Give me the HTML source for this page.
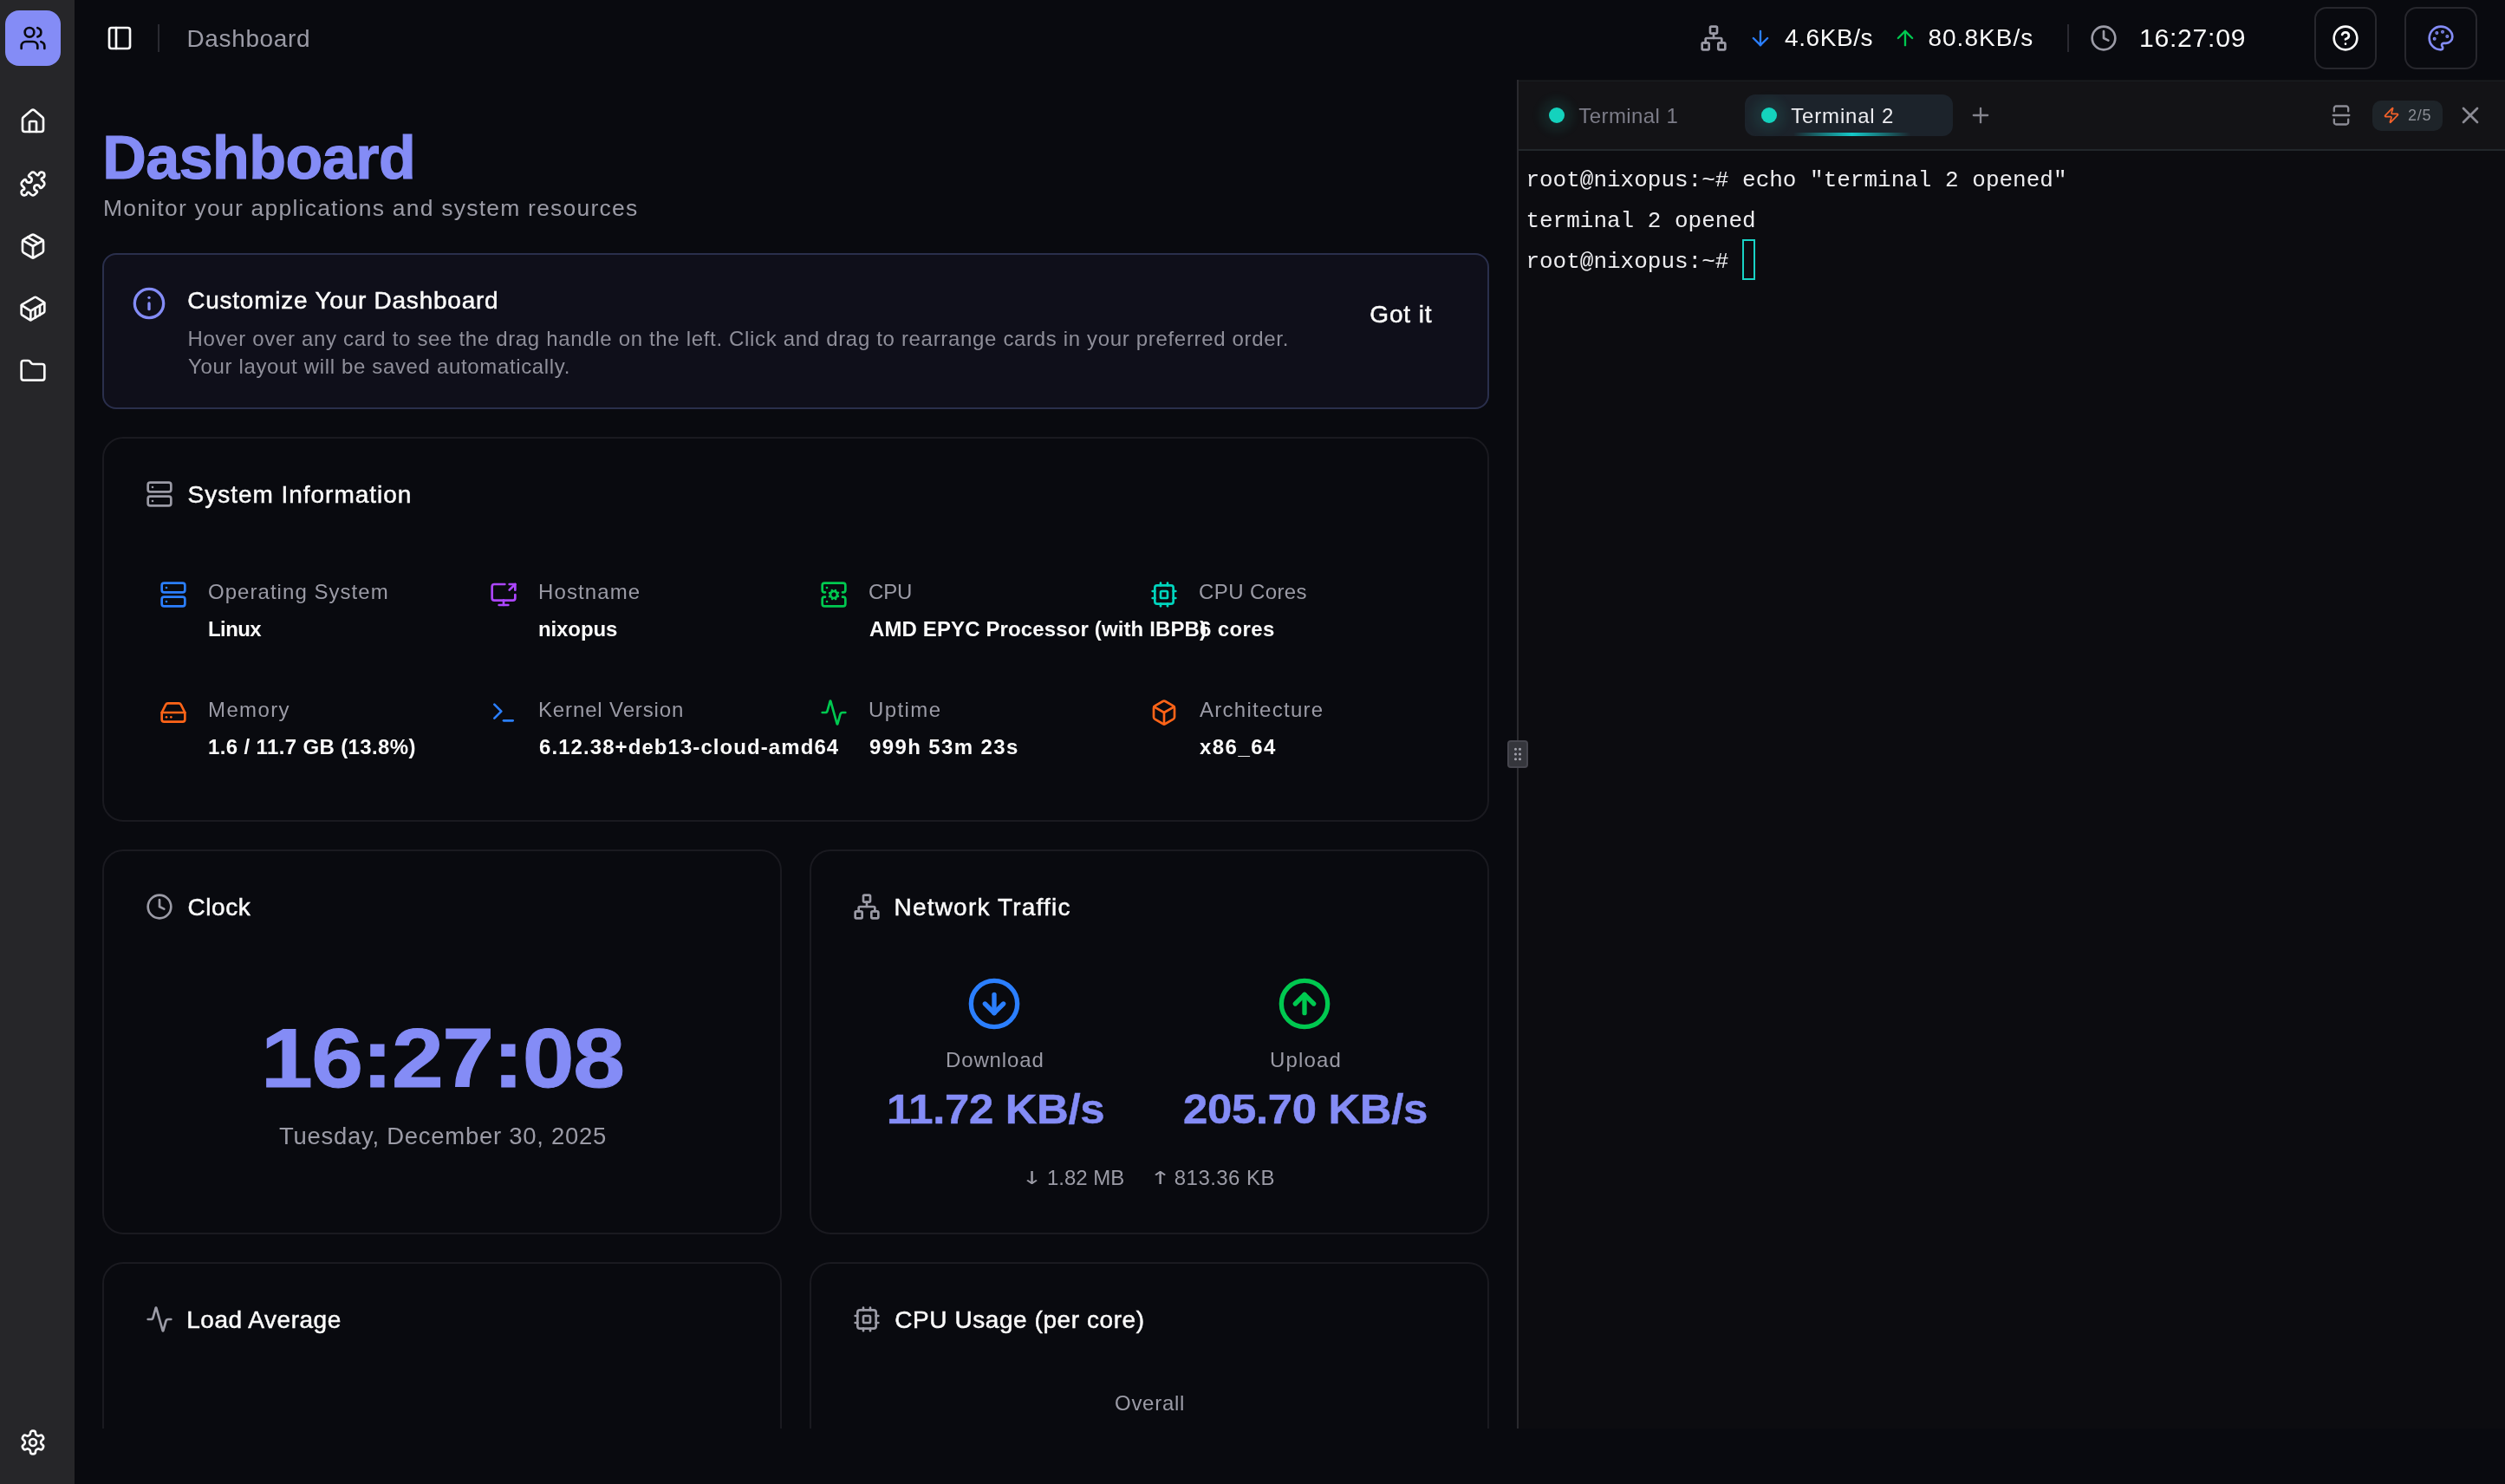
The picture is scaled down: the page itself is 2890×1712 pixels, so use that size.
<!DOCTYPE html>
<html lang="en"><head><meta charset="utf-8"><title>Dashboard</title>
<style>
html,body{margin:0;padding:0;background:#090a0f;}
body{width:2890px;height:1712px;position:relative;overflow:hidden;font-family:"Liberation Sans", sans-serif;}
#app{position:absolute;left:0;top:0;width:2890px;height:1712px;will-change:transform}
.b{position:absolute;box-sizing:border-box}
.t{position:absolute;white-space:pre;box-sizing:border-box}
.ic{position:absolute;fill:none;stroke:currentColor;stroke-linecap:round;stroke-linejoin:round;overflow:visible}
</style></head><body><div id="app">
<div class="b" style="left:0px;top:0px;width:86px;height:1712px;background:#262629"></div>
<div class="b" style="left:6px;top:12px;width:64px;height:64px;background:#848cf6;border-radius:16px"></div>
<svg class="ic" style="left:22px;top:28px;color:#0a0a10;" width="32" height="32" viewBox="0 0 24 24" stroke-width="2"><path d="M16 21v-2a4 4 0 0 0-4-4H6a4 4 0 0 0-4 4v2"/><circle cx="9" cy="7" r="4"/><path d="M22 21v-2a4 4 0 0 0-3-3.87"/><path d="M16 3.13a4 4 0 0 1 0 7.75"/></svg>
<svg class="ic" style="left:22px;top:124px;color:#fafafa;" width="32" height="32" viewBox="0 0 24 24" stroke-width="2"><path d="M15 21v-8a1 1 0 0 0-1-1h-4a1 1 0 0 0-1 1v8"/><path d="M3 10a2 2 0 0 1 .709-1.528l7-5.999a2 2 0 0 1 2.582 0l7 5.999A2 2 0 0 1 21 10v9a2 2 0 0 1-2 2H5a2 2 0 0 1-2-2z"/></svg>
<svg class="ic" style="left:22px;top:196px;color:#fafafa;" width="32" height="32" viewBox="0 0 24 24" stroke-width="2"><path d="M15.39 4.39a1 1 0 0 0 1.68-.474 2.5 2.5 0 1 1 3.014 3.015 1 1 0 0 0-.474 1.68l1.683 1.682a2.414 2.414 0 0 1 0 3.414L19.61 15.39a1 1 0 0 1-1.68-.474 2.5 2.5 0 1 0-3.014 3.015 1 1 0 0 1 .474 1.68l-1.683 1.682a2.414 2.414 0 0 1-3.414 0L8.61 19.61a1 1 0 0 0-1.68.474 2.5 2.5 0 1 1-3.014-3.015 1 1 0 0 0 .474-1.68l-1.683-1.682a2.414 2.414 0 0 1 0-3.414L4.39 8.61a1 1 0 0 1 1.68.474 2.5 2.5 0 1 0 3.014-3.015 1 1 0 0 1-.474-1.68l1.683-1.682a2.414 2.414 0 0 1 3.414 0z"/></svg>
<svg class="ic" style="left:22px;top:268px;color:#fafafa;" width="32" height="32" viewBox="0 0 24 24" stroke-width="2"><path d="M11 21.73a2 2 0 0 0 2 0l7-4A2 2 0 0 0 21 16V8a2 2 0 0 0-1-1.73l-7-4a2 2 0 0 0-2 0l-7 4A2 2 0 0 0 3 8v8a2 2 0 0 0 1 1.73z"/><path d="M12 22V12"/><polyline points="3.29 7 12 12 20.71 7"/><path d="m7.5 4.27 9 5.15"/></svg>
<svg class="ic" style="left:22px;top:340px;color:#fafafa;" width="32" height="32" viewBox="0 0 24 24" stroke-width="2"><path d="M22 7.7c0-.6-.4-1.2-.8-1.5l-6.3-3.9a1.72 1.72 0 0 0-1.7 0l-10.3 6c-.5.2-.9.8-.9 1.4v6.6c0 .5.4 1.2.8 1.5l6.3 3.9a1.72 1.72 0 0 0 1.7 0l10.3-6c.5-.3.9-1 .9-1.5Z"/><path d="M10 21.9V14L2.1 9.1"/><path d="m10 14 11.9-6.9"/><path d="M14 19.8v-8.1"/><path d="M18 17.5V9.4"/></svg>
<svg class="ic" style="left:22px;top:412px;color:#fafafa;" width="32" height="32" viewBox="0 0 24 24" stroke-width="2"><path d="M20 20a2 2 0 0 0 2-2V8a2 2 0 0 0-2-2h-7.9a2 2 0 0 1-1.69-.9L9.6 3.9A2 2 0 0 0 7.93 3H4a2 2 0 0 0-2 2v13a2 2 0 0 0 2 2Z"/></svg>
<svg class="ic" style="left:22px;top:1648px;color:#fafafa;" width="32" height="32" viewBox="0 0 24 24" stroke-width="2"><path d="M12.22 2h-.44a2 2 0 0 0-2 2v.18a2 2 0 0 1-1 1.73l-.43.25a2 2 0 0 1-2 0l-.15-.08a2 2 0 0 0-2.73.73l-.22.38a2 2 0 0 0 .73 2.73l.15.1a2 2 0 0 1 1 1.72v.51a2 2 0 0 1-1 1.74l-.15.09a2 2 0 0 0-.73 2.73l.22.38a2 2 0 0 0 2.73.73l.15-.08a2 2 0 0 1 2 0l.43.25a2 2 0 0 1 1 1.73V20a2 2 0 0 0 2 2h.44a2 2 0 0 0 2-2v-.18a2 2 0 0 1 1-1.73l.43-.25a2 2 0 0 1 2 0l.15.08a2 2 0 0 0 2.73-.73l.22-.39a2 2 0 0 0-.73-2.73l-.15-.08a2 2 0 0 1-1-1.74v-.5a2 2 0 0 1 1-1.74l.15-.09a2 2 0 0 0 .73-2.73l-.22-.38a2 2 0 0 0-2.73-.73l-.15.08a2 2 0 0 1-2 0l-.43-.25a2 2 0 0 1-1-1.73V4a2 2 0 0 0-2-2z"/><circle cx="12" cy="12" r="3"/></svg>
<svg class="ic" style="left:122px;top:28px;color:#fafafa;" width="32" height="32" viewBox="0 0 24 24" stroke-width="2"><rect width="18" height="18" x="3" y="3" rx="2"/><path d="M9 3v18"/></svg>
<div class="b" style="left:182px;top:28px;width:2px;height:32px;background:#2a2a31"></div>
<div class="t" style="left:215.50px;top:30.50px;font:400 28px/28px 'Liberation Sans', sans-serif;color:#9b9ba6;letter-spacing:0.637px">Dashboard</div>
<svg class="ic" style="left:1961px;top:28px;color:#9b9ba6;" width="32" height="32" viewBox="0 0 24 24" stroke-width="2"><rect x="16" y="16" width="6" height="6" rx="1"/><rect x="2" y="16" width="6" height="6" rx="1"/><rect x="9" y="2" width="6" height="6" rx="1"/><path d="M5 16v-3a1 1 0 0 1 1-1h12a1 1 0 0 1 1 1v3"/><path d="M12 12V8"/></svg>
<svg class="ic" style="left:2017px;top:30px;color:#2b7fff;" width="28" height="28" viewBox="0 0 24 24" stroke-width="2"><path d="M12 5v14"/><path d="m19 12-7 7-7-7"/></svg>
<div class="t" style="left:2059.00px;top:30.30px;font:400 28px/28px 'Liberation Sans', sans-serif;color:#fafafa;letter-spacing:0.591px">4.6KB/s</div>
<svg class="ic" style="left:2184px;top:30px;color:#00c950;" width="28" height="28" viewBox="0 0 24 24" stroke-width="2"><path d="m5 12 7-7 7 7"/><path d="M12 19V5"/></svg>
<div class="t" style="left:2224.40px;top:30.30px;font:400 28px/28px 'Liberation Sans', sans-serif;color:#fafafa;letter-spacing:1.025px">80.8KB/s</div>
<div class="b" style="left:2385px;top:28px;width:2px;height:32px;background:#2a2a31"></div>
<svg class="ic" style="left:2411px;top:28px;color:#9b9ba6;" width="32" height="32" viewBox="0 0 24 24" stroke-width="2"><circle cx="12" cy="12" r="10"/><polyline points="12 6 12 12 16 14"/></svg>
<div class="t" style="left:2467.92px;top:30.45px;font:400 29px/29px 'Liberation Sans', sans-serif;color:#fafafa;letter-spacing:0.694px;transform:scaleX(1.04);transform-origin:0 0">16:27:09</div>
<div class="b" style="left:2670px;top:8px;width:72px;height:72px;border:2px solid #27272d;border-radius:14px"></div>
<svg class="ic" style="left:2690px;top:28px;color:#fafafa;" width="32" height="32" viewBox="0 0 24 24" stroke-width="2"><circle cx="12" cy="12" r="10"/><path d="M9.09 9a3 3 0 0 1 5.83 1c0 2-3 3-3 3"/><path d="M12 17h.01"/></svg>
<div class="b" style="left:2774px;top:8px;width:84px;height:72px;border:2px solid #27272d;border-radius:14px"></div>
<svg class="ic" style="left:2800px;top:28px;color:#848cf6;" width="32" height="32" viewBox="0 0 24 24" stroke-width="2"><circle cx="13.5" cy="6.5" r=".5" fill="currentColor"/><circle cx="17.5" cy="10.5" r=".5" fill="currentColor"/><circle cx="8.5" cy="7.5" r=".5" fill="currentColor"/><circle cx="6.5" cy="12.5" r=".5" fill="currentColor"/><path d="M12 2C6.5 2 2 6.5 2 12s4.5 10 10 10c.926 0 1.648-.746 1.648-1.688 0-.437-.18-.835-.437-1.125-.29-.289-.438-.652-.438-1.125a1.64 1.64 0 0 1 1.668-1.668h1.996c3.051 0 5.555-2.503 5.555-5.554C21.965 6.012 17.461 2 12 2z"/></svg>
<div class="t" style="left:118.30px;top:146.55px;font:700 70px/70px 'Liberation Sans', sans-serif;color:#848cf6;letter-spacing:-0.533px;-webkit-text-stroke:1.2px #848cf6">Dashboard</div>
<div class="t" style="left:119.00px;top:226.97px;font:400 26.5px/26.5px 'Liberation Sans', sans-serif;color:#9b9ba6;letter-spacing:1.224px">Monitor your applications and system resources</div>
<div class="b" style="left:118px;top:292px;width:1600px;height:180px;background:#0f0f1a;border:2px solid #2a2f4c;border-radius:16px"></div>
<svg class="ic" style="left:152px;top:330px;color:#848cf6;" width="40" height="40" viewBox="0 0 24 24" stroke-width="2"><circle cx="12" cy="12" r="10"/><path d="M12 16v-4"/><path d="M12 8h.01"/></svg>
<div class="t" style="left:216.25px;top:332.80px;font:400 28px/28px 'Liberation Sans', sans-serif;color:#fafafa;letter-spacing:0.761px;-webkit-text-stroke:0.5px #fafafa">Customize Your Dashboard</div>
<div class="t" style="left:216.50px;top:378.98px;font:400 24px/24px 'Liberation Sans', sans-serif;color:#8f8f9a;letter-spacing:0.671px">Hover over any card to see the drag handle on the left. Click and drag to rearrange cards in your preferred order.</div>
<div class="t" style="left:217.00px;top:410.68px;font:400 24px/24px 'Liberation Sans', sans-serif;color:#8f8f9a;letter-spacing:0.653px">Your layout will be saved automatically.</div>
<div class="t" style="left:1580.25px;top:348.60px;font:400 28px/28px 'Liberation Sans', sans-serif;color:#fafafa;letter-spacing:0.874px;-webkit-text-stroke:0.5px #fafafa">Got it</div>
<div class="b" style="left:118px;top:504px;width:1600px;height:444px;border:2px solid #1a1a20;border-radius:24px"></div>
<svg class="ic" style="left:168px;top:554px;color:#9b9ba6;" width="32" height="32" viewBox="0 0 24 24" stroke-width="2"><rect width="20" height="8" x="2" y="2" rx="2" ry="2"/><rect width="20" height="8" x="2" y="14" rx="2" ry="2"/><line x1="6" x2="6.01" y1="6" y2="6"/><line x1="6" x2="6.01" y1="18" y2="18"/></svg>
<div class="t" style="left:216.55px;top:557.30px;font:400 28px/28px 'Liberation Sans', sans-serif;color:#fafafa;letter-spacing:0.975px;-webkit-text-stroke:0.5px #fafafa">System Information</div>
<svg class="ic" style="left:184px;top:670px;color:#2b7fff;" width="32" height="32" viewBox="0 0 24 24" stroke-width="2"><rect width="20" height="8" x="2" y="2" rx="2" ry="2"/><rect width="20" height="8" x="2" y="14" rx="2" ry="2"/><line x1="6" x2="6.01" y1="6" y2="6"/><line x1="6" x2="6.01" y1="18" y2="18"/></svg>
<div class="t" style="left:240.00px;top:671.18px;font:400 24px/24px 'Liberation Sans', sans-serif;color:#9b9ba6;letter-spacing:1.041px">Operating System</div>
<div class="t" style="left:240.00px;top:713.98px;font:700 24px/24px 'Liberation Sans', sans-serif;color:#fafafa;letter-spacing:-0.587px">Linux</div>
<svg class="ic" style="left:565px;top:670px;color:#ad46ff;" width="32" height="32" viewBox="0 0 24 24" stroke-width="2"><path d="M13 3H4a2 2 0 0 0-2 2v10a2 2 0 0 0 2 2h16a2 2 0 0 0 2-2v-3"/><path d="M8 21h8"/><path d="M12 17v4"/><path d="m17 8 5-5"/><path d="M17 3h5v5"/></svg>
<div class="t" style="left:621.00px;top:671.18px;font:400 24px/24px 'Liberation Sans', sans-serif;color:#9b9ba6;letter-spacing:1.109px">Hostname</div>
<div class="t" style="left:621.00px;top:713.98px;font:700 24px/24px 'Liberation Sans', sans-serif;color:#fafafa;letter-spacing:-0.109px">nixopus</div>
<svg class="ic" style="left:946px;top:670px;color:#00c950;" width="32" height="32" viewBox="0 0 24 24" stroke-width="2"><circle cx="12" cy="12" r="3"/><path d="M4.5 10H4a2 2 0 0 1-2-2V4a2 2 0 0 1 2-2h16a2 2 0 0 1 2 2v4a2 2 0 0 1-2 2h-.5"/><path d="M4.5 14H4a2 2 0 0 0-2 2v4a2 2 0 0 0 2 2h16a2 2 0 0 0 2-2v-4a2 2 0 0 0-2-2h-.5"/><path d="M6 6h.01"/><path d="M6 18h.01"/><path d="m15.7 13.4-.9-.3"/><path d="m9.2 10.9-.9-.3"/><path d="m10.6 15.7.3-.9"/><path d="m13.6 15.7-.4-1"/><path d="m10.8 9.3-.4-1"/><path d="m8.3 13.6 1-.4"/><path d="m14.7 10.8 1-.4"/><path d="m13.4 8.3-.3.9"/></svg>
<div class="t" style="left:1002.00px;top:671.18px;font:400 24px/24px 'Liberation Sans', sans-serif;color:#9b9ba6;letter-spacing:-0.170px">CPU</div>
<div class="t" style="left:1003.00px;top:713.98px;font:700 24px/24px 'Liberation Sans', sans-serif;color:#fafafa;letter-spacing:0.124px">AMD EPYC Processor (with IBPB)</div>
<svg class="ic" style="left:1327px;top:670px;color:#00d5be;" width="32" height="32" viewBox="0 0 24 24" stroke-width="2"><rect width="16" height="16" x="4" y="4" rx="2"/><rect width="6" height="6" x="9" y="9" rx="1"/><path d="M15 2v2"/><path d="M15 20v2"/><path d="M2 15h2"/><path d="M2 9h2"/><path d="M20 15h2"/><path d="M20 9h2"/><path d="M9 2v2"/><path d="M9 20v2"/></svg>
<div class="t" style="left:1383.00px;top:671.18px;font:400 24px/24px 'Liberation Sans', sans-serif;color:#9b9ba6;letter-spacing:0.405px">CPU Cores</div>
<div class="t" style="left:1384.00px;top:713.98px;font:700 24px/24px 'Liberation Sans', sans-serif;color:#fafafa;letter-spacing:0.382px">6 cores</div>
<svg class="ic" style="left:184px;top:806px;color:#ff6418;" width="32" height="32" viewBox="0 0 24 24" stroke-width="2"><line x1="22" x2="2" y1="12" y2="12"/><path d="M5.45 5.11 2 12v6a2 2 0 0 0 2 2h16a2 2 0 0 0 2-2v-6l-3.45-6.89A2 2 0 0 0 16.76 4H7.24a2 2 0 0 0-1.79 1.11z"/><line x1="6" x2="6.01" y1="16" y2="16"/><line x1="10" x2="10.01" y1="16" y2="16"/></svg>
<div class="t" style="left:240.00px;top:807.18px;font:400 24px/24px 'Liberation Sans', sans-serif;color:#9b9ba6;letter-spacing:1.386px">Memory</div>
<div class="t" style="left:240.00px;top:849.98px;font:700 24px/24px 'Liberation Sans', sans-serif;color:#fafafa;letter-spacing:0.363px">1.6 / 11.7 GB (13.8%)</div>
<svg class="ic" style="left:565px;top:806px;color:#2b7fff;" width="32" height="32" viewBox="0 0 24 24" stroke-width="2"><polyline points="4 17 10 11 4 5"/><line x1="12" x2="20" y1="19" y2="19"/></svg>
<div class="t" style="left:621.00px;top:807.18px;font:400 24px/24px 'Liberation Sans', sans-serif;color:#9b9ba6;letter-spacing:0.866px">Kernel Version</div>
<div class="t" style="left:622.00px;top:849.98px;font:700 24px/24px 'Liberation Sans', sans-serif;color:#fafafa;letter-spacing:1.070px">6.12.38+deb13-cloud-amd64</div>
<svg class="ic" style="left:946px;top:806px;color:#00c950;" width="32" height="32" viewBox="0 0 24 24" stroke-width="2"><path d="M22 12h-2.48a2 2 0 0 0-1.93 1.46l-2.35 8.36a.25.25 0 0 1-.48 0L9.24 2.18a.25.25 0 0 0-.48 0l-2.35 8.36A2 2 0 0 1 4.49 12H2"/></svg>
<div class="t" style="left:1002.00px;top:807.18px;font:400 24px/24px 'Liberation Sans', sans-serif;color:#9b9ba6;letter-spacing:1.406px">Uptime</div>
<div class="t" style="left:1003.00px;top:849.98px;font:700 24px/24px 'Liberation Sans', sans-serif;color:#fafafa;letter-spacing:1.385px">999h 53m 23s</div>
<svg class="ic" style="left:1327px;top:806px;color:#ff6418;" width="32" height="32" viewBox="0 0 24 24" stroke-width="2"><path d="M21 8a2 2 0 0 0-1-1.73l-7-4a2 2 0 0 0-2 0l-7 4A2 2 0 0 0 3 8v8a2 2 0 0 0 1 1.73l7 4a2 2 0 0 0 2 0l7-4A2 2 0 0 0 21 16Z"/><path d="m3.3 7 8.7 5 8.7-5"/><path d="M12 22V12"/></svg>
<div class="t" style="left:1384.00px;top:807.18px;font:400 24px/24px 'Liberation Sans', sans-serif;color:#9b9ba6;letter-spacing:1.282px">Architecture</div>
<div class="t" style="left:1384.00px;top:849.98px;font:700 24px/24px 'Liberation Sans', sans-serif;color:#fafafa;letter-spacing:1.452px">x86_64</div>
<div class="b" style="left:118px;top:980px;width:784px;height:444px;border:2px solid #1a1a20;border-radius:24px"></div>
<svg class="ic" style="left:168px;top:1030px;color:#9b9ba6;" width="32" height="32" viewBox="0 0 24 24" stroke-width="2"><circle cx="12" cy="12" r="10"/><polyline points="12 6 12 12 16 14"/></svg>
<div class="t" style="left:216.45px;top:1033.30px;font:400 28px/28px 'Liberation Sans', sans-serif;color:#fafafa;letter-spacing:0.572px;-webkit-text-stroke:0.5px #fafafa">Clock</div>
<div class="t" style="left:300.78px;top:1173.34px;font:700 96px/96px 'Liberation Sans', sans-serif;color:#848cf6;letter-spacing:-1.329px;-webkit-text-stroke:1px #848cf6;transform:scaleX(1.12);transform-origin:0 0">16:27:08</div>
<div class="t" style="left:322.00px;top:1296.72px;font:400 27.5px/27.5px 'Liberation Sans', sans-serif;color:#9b9ba6;letter-spacing:0.722px">Tuesday, December 30, 2025</div>
<div class="b" style="left:934px;top:980px;width:784px;height:444px;border:2px solid #1a1a20;border-radius:24px"></div>
<svg class="ic" style="left:984px;top:1030px;color:#9b9ba6;" width="32" height="32" viewBox="0 0 24 24" stroke-width="2"><rect x="16" y="16" width="6" height="6" rx="1"/><rect x="2" y="16" width="6" height="6" rx="1"/><rect x="9" y="2" width="6" height="6" rx="1"/><path d="M5 16v-3a1 1 0 0 1 1-1h12a1 1 0 0 1 1 1v3"/><path d="M12 12V8"/></svg>
<div class="t" style="left:1031.55px;top:1033.30px;font:400 28px/28px 'Liberation Sans', sans-serif;color:#fafafa;letter-spacing:1.193px;-webkit-text-stroke:0.5px #fafafa">Network Traffic</div>
<svg class="ic" style="left:1115px;top:1126px;color:#2b7fff;" width="64" height="64" viewBox="0 0 24 24" stroke-width="2"><circle cx="12" cy="12" r="10"/><path d="M12 8v8"/><path d="m8 12 4 4 4-4"/></svg>
<svg class="ic" style="left:1473px;top:1126px;color:#00c950;" width="64" height="64" viewBox="0 0 24 24" stroke-width="2"><circle cx="12" cy="12" r="10"/><path d="m16 12-4-4-4 4"/><path d="M12 16V8"/></svg>
<div class="t" style="left:1091.00px;top:1210.68px;font:400 24px/24px 'Liberation Sans', sans-serif;color:#9b9ba6;letter-spacing:0.859px">Download</div>
<div class="t" style="left:1465.00px;top:1210.68px;font:400 24px/24px 'Liberation Sans', sans-serif;color:#9b9ba6;letter-spacing:1.139px">Upload</div>
<div class="t" style="left:1022.67px;top:1255.77px;font:700 48px/48px 'Liberation Sans', sans-serif;color:#848cf6;letter-spacing:-0.307px;-webkit-text-stroke:0.5px #848cf6;transform:scaleX(1.06);transform-origin:0 0">11.72 KB/s</div>
<div class="t" style="left:1365.19px;top:1255.77px;font:700 48px/48px 'Liberation Sans', sans-serif;color:#848cf6;letter-spacing:-0.316px;-webkit-text-stroke:0.5px #848cf6;transform:scaleX(1.06);transform-origin:0 0">205.70 KB/s</div>
<div class="t" style="left:1178.08px;top:1349.25px;font:400 20.5px/20.5px 'DejaVu Sans', sans-serif;color:#9b9ba6;letter-spacing:0.000px;transform:scaleX(1.43);transform-origin:0 0">↓</div>
<div class="t" style="left:1208.00px;top:1346.68px;font:400 24px/24px 'Liberation Sans', sans-serif;color:#9b9ba6;letter-spacing:-0.029px">1.82 MB</div>
<div class="t" style="left:1325.84px;top:1349.25px;font:400 20.5px/20.5px 'DejaVu Sans', sans-serif;color:#9b9ba6;letter-spacing:0.000px;transform:scaleX(1.44);transform-origin:0 0">↑</div>
<div class="t" style="left:1354.80px;top:1346.68px;font:400 24px/24px 'Liberation Sans', sans-serif;color:#9b9ba6;letter-spacing:0.452px">813.36 KB</div>
<div class="b" style="left:86px;top:1440px;width:1664px;height:208px;overflow:hidden">
<div class="b" style="left:32px;top:16px;width:784px;height:444px;border:2px solid #1a1a20;border-radius:24px"></div>
<div class="b" style="left:848px;top:16px;width:784px;height:444px;border:2px solid #1a1a20;border-radius:24px"></div>
</div>
<svg class="ic" style="left:168px;top:1506px;color:#9b9ba6;" width="32" height="32" viewBox="0 0 24 24" stroke-width="2"><path d="M22 12h-2.48a2 2 0 0 0-1.93 1.46l-2.35 8.36a.25.25 0 0 1-.48 0L9.24 2.18a.25.25 0 0 0-.48 0l-2.35 8.36A2 2 0 0 1 4.49 12H2"/></svg>
<div class="t" style="left:215.25px;top:1509.30px;font:400 28px/28px 'Liberation Sans', sans-serif;color:#fafafa;letter-spacing:0.520px;-webkit-text-stroke:0.5px #fafafa">Load Average</div>
<svg class="ic" style="left:984px;top:1506px;color:#9b9ba6;" width="32" height="32" viewBox="0 0 24 24" stroke-width="2"><rect width="16" height="16" x="4" y="4" rx="2"/><rect width="6" height="6" x="9" y="9" rx="1"/><path d="M15 2v2"/><path d="M15 20v2"/><path d="M2 15h2"/><path d="M2 9h2"/><path d="M20 15h2"/><path d="M20 9h2"/><path d="M9 2v2"/><path d="M9 20v2"/></svg>
<div class="t" style="left:1032.25px;top:1509.30px;font:400 28px/28px 'Liberation Sans', sans-serif;color:#fafafa;letter-spacing:0.571px;-webkit-text-stroke:0.5px #fafafa">CPU Usage (per core)</div>
<div class="t" style="left:1286.00px;top:1606.68px;font:400 24px/24px 'Liberation Sans', sans-serif;color:#9b9ba6;letter-spacing:0.719px">Overall</div>
<div class="b" style="left:1750px;top:92px;width:1140px;height:1556px;background:#0c0c10"></div>
<div class="b" style="left:1750px;top:92px;width:1140px;height:82px;background:#131316;border-bottom:2px solid #22272b"></div>
<div class="b" style="left:1752px;top:93px;width:1138px;height:1px;background:#181d20"></div>
<div class="b" style="left:1750px;top:92px;width:2px;height:1556px;background:#2a2a2f"></div>
<div class="b" style="left:1787px;top:124px;width:18px;height:18px;background:#14d2bd;border-radius:50%;box-shadow:0 0 12px 10px rgba(45,212,191,.09)"></div>
<div class="t" style="left:1821.30px;top:121.68px;font:400 24px/24px 'Liberation Sans', sans-serif;color:#7c7c88;letter-spacing:0.416px">Terminal 1</div>
<div class="b" style="left:2013px;top:109px;width:240px;height:48px;background:#1c232b;border-radius:12px;overflow:hidden"></div>
<div class="b" style="left:2069px;top:153px;width:135px;height:4px;background:linear-gradient(90deg,rgba(20,210,189,0),#14c8c8 50%,rgba(20,210,189,0))"></div>
<div class="b" style="left:2032px;top:124px;width:18px;height:18px;background:#14d2bd;border-radius:50%;box-shadow:0 0 12px 10px rgba(45,212,191,.09)"></div>
<div class="t" style="left:2066.30px;top:121.68px;font:400 24px/24px 'Liberation Sans', sans-serif;color:#ececf0;letter-spacing:0.816px">Terminal 2</div>
<svg class="ic" style="left:2271px;top:119px;color:#85858e;" width="28" height="28" viewBox="0 0 24 24" stroke-width="2"><path d="M5 12h14"/><path d="M12 5v14"/></svg>
<svg class="ic" style="left:2687px;top:119px;color:#8c8c95;" width="28" height="28" viewBox="0 0 24 24" stroke-width="2"><path d="M5 8V5c0-1 1-2 2-2h10c1 0 2 1 2 2v3"/><path d="M19 16v3c0 1-1 2-2 2H7c-1 0-2-1-2-2v-3"/><line x1="4" x2="20" y1="12" y2="12"/></svg>
<div class="b" style="left:2737px;top:116px;width:81px;height:35px;background:#1e2429;border-radius:10px"></div>
<svg class="ic" style="left:2749px;top:123px;color:#f4622a;" width="20" height="20" viewBox="0 0 24 24" stroke-width="2"><path d="M4 14a1 1 0 0 1-.78-1.63l9.9-10.2a.5.5 0 0 1 .86.46l-1.92 6.02A1 1 0 0 0 13 10h7a1 1 0 0 1 .78 1.63l-9.9 10.2a.5.5 0 0 1-.86-.46l1.92-6.02A1 1 0 0 0 11 14z"/></svg>
<div class="t" style="left:2778.00px;top:124.46px;font:400 18px/18px 'Liberation Sans', sans-serif;color:#8a8d94;letter-spacing:0.694px">2/5</div>
<svg class="ic" style="left:2834px;top:117px;color:#8c8c95;" width="32" height="32" viewBox="0 0 24 24" stroke-width="2"><path d="M18 6 6 18"/><path d="m6 6 12 12"/></svg>
<div class="t" style="left:1760.4px;top:182px;font:26px/47px 'Liberation Mono', monospace;color:#ededf0;padding-top:3px;height:44px">root@nixopus:~# echo &quot;terminal 2 opened&quot;</div>
<div class="t" style="left:1760.4px;top:229px;font:26px/47px 'Liberation Mono', monospace;color:#ededf0;padding-top:3px;height:44px">terminal 2 opened</div>
<div class="t" style="left:1760.4px;top:276px;font:26px/47px 'Liberation Mono', monospace;color:#ededf0;padding-top:3px;height:44px">root@nixopus:~#</div>
<div class="b" style="left:2010px;top:276px;width:15px;height:47px;border:2px solid #19d3c5"></div>
<div class="b" style="left:1739px;top:854px;width:24px;height:32px;background:#35363c;border:2px solid #46464e;border-radius:4px"></div>
<svg class="ic" style="left:1741px;top:860px;color:#a6a6b0;" width="20" height="20" viewBox="0 0 24 24" stroke-width="1.6"><circle cx="9" cy="12" r="1"/><circle cx="9" cy="5" r="1"/><circle cx="9" cy="19" r="1"/><circle cx="15" cy="12" r="1"/><circle cx="15" cy="5" r="1"/><circle cx="15" cy="19" r="1"/></svg>
</div></body></html>
